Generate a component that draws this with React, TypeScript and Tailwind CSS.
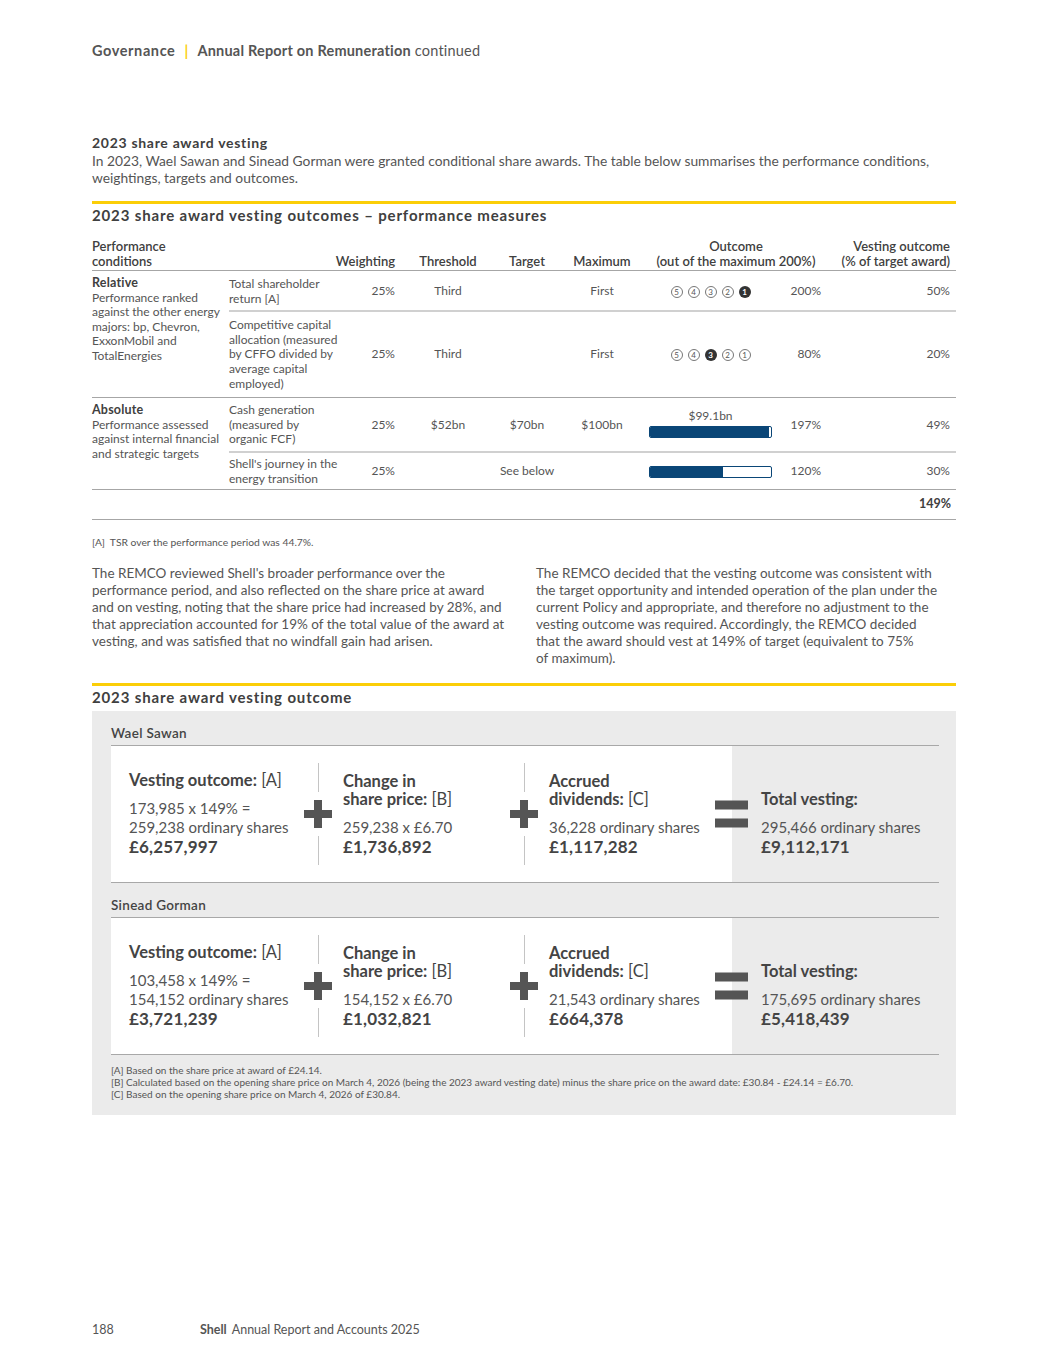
import React from "react";

const ROW_GRID =
  "grid grid-cols-[116px_55px_96px_62px_88px_129px_51px_129px] items-center";

function Circles({ active }: { active: number }) {
  return (
    <div className="flex items-center gap-[5px]">
      {[5, 4, 3, 2, 1].map((n) => (
        <span
          key={n}
          className={
            n === active
              ? "flex h-[12px] w-[12px] items-center justify-center rounded-full bg-[#333] text-[8px] font-bold leading-none text-white"
              : "flex h-[12px] w-[12px] items-center justify-center rounded-full border border-[#777] text-[8px] leading-none text-[#555]"
          }
        >
          {n}
        </span>
      ))}
    </div>
  );
}

function Bar({ pct }: { pct: number }) {
  return (
    <div className="h-[12px] w-[123px] rounded-[2px] border border-[#0a4677] bg-white">
      <div
        className="h-full rounded-l-[1px] bg-[#0a4677]"
        style={{ width: `${pct}%` }}
      />
    </div>
  );
}

type SubRow = {
  measure: React.ReactNode;
  weight: string;
  threshold?: string;
  target?: string;
  maximum?: string;
  outcome: React.ReactNode;
  pct: string;
  vest: string;
  pad: string;
};

function Group({
  title,
  desc,
  rows,
}: {
  title: string;
  desc: React.ReactNode;
  rows: SubRow[];
}) {
  return (
    <div className="flex border-b border-[#a6a6a6]">
      <div className="w-[137px] shrink-0 pt-[5px] pr-2 text-[12px] leading-[14.6px] text-[#555]">
        <div className="text-[12.5px] font-bold tracking-[0.2px] text-[#404040]">
          {title}
        </div>
        {desc}
      </div>
      <div className="flex-1">
        {rows.map((r, i) => (
          <div
            key={i}
            className={`${ROW_GRID} ${r.pad} ${
              i < rows.length - 1 ? "border-b-2 border-[#d0d0d0]" : ""
            } text-[12px] leading-[14.6px] text-[#555]`}
          >
            <div>{r.measure}</div>
            <div className="pr-[5px] text-right">{r.weight}</div>
            <div className="text-center">{r.threshold}</div>
            <div className="text-center">{r.target}</div>
            <div className="text-center">{r.maximum}</div>
            <div className="flex justify-center">{r.outcome}</div>
            <div className="pr-[5px] text-right">{r.pct}</div>
            <div className="pr-[5px] text-right">{r.vest}</div>
          </div>
        ))}
      </div>
    </div>
  );
}

function Plus() {
  return (
    <svg width="28" height="28" viewBox="0 0 28 28" className="shrink-0">
      <path d="M10 0h8v10h10v8H18v10h-8V18H0v-8h10z" fill="#555" />
    </svg>
  );
}

function Sep() {
  return (
    <div className="flex w-[50px] shrink-0 flex-col items-center">
      <div className="w-px flex-1 bg-[#c4c4c4]" />
      <div className="py-[8px]">
        <Plus />
      </div>
      <div className="w-px flex-1 bg-[#c4c4c4]" />
    </div>
  );
}

function Head({ bold, tag }: { bold: React.ReactNode; tag?: string }) {
  return (
    <div className="whitespace-nowrap text-[16.5px] leading-[18px] text-[#444]">
      <span className="font-bold">{bold}</span>
      {tag && <span className="font-normal"> {tag}</span>}
    </div>
  );
}

function Values({ lines, total }: { lines: string[]; total: string }) {
  return (
    <div className="mt-[10px] whitespace-nowrap text-[15px] leading-[19px] text-[#555]">
      {lines.map((l) => (
        <div key={l}>{l}</div>
      ))}
      <div className="text-[17px] font-bold tracking-[0.2px] text-[#444]">
        {total}
      </div>
    </div>
  );
}

function Person({
  name,
  a,
  b,
  c,
  t,
}: {
  name: string;
  a: { lines: string[]; total: string };
  b: { lines: string[]; total: string };
  c: { lines: string[]; total: string };
  t: { lines: string[]; total: string };
}) {
  return (
    <>
      <div className="flex h-[35px] items-end border-b border-[#a8a8a8] pb-[4px] text-[13.5px] font-semibold leading-[16px] tracking-[0.3px] text-[#444]">
        {name}
      </div>
      <div className="flex h-[137px] border-b border-[#a8a8a8]">
        <div className="flex w-[621px] bg-white py-[17px]">
          <div className="flex w-[182px] flex-col justify-end pb-[9px] pl-[18px]">
            <Head bold="Vesting outcome:" tag="[A]" />
            <Values {...a} />
          </div>
          <Sep />
          <div className="flex w-[156px] flex-col justify-end pb-[9px]">
            <Head
              bold={
                <>
                  Change in
                  <br />
                  share price:
                </>
              }
              tag="[B]"
            />
            <Values {...b} />
          </div>
          <Sep />
          <div className="flex w-[183px] flex-col justify-end pb-[9px]">
            <Head
              bold={
                <>
                  Accrued
                  <br />
                  dividends:
                </>
              }
              tag="[C]"
            />
            <Values {...c} />
          </div>
        </div>
        <div className="relative flex flex-1 flex-col justify-end py-[17px] pb-[26px] pl-[29px]">
          <div className="absolute left-[-17px] top-1/2 flex -translate-y-1/2 flex-col gap-[9px]">
            <div className="h-[9px] w-[33px] bg-[#555]" />
            <div className="h-[9px] w-[33px] bg-[#555]" />
          </div>
          <Head bold="Total vesting:" />
          <Values {...t} />
        </div>
      </div>
    </>
  );
}

export default function App() {
  return (
    <div
      className="flex h-[1365px] w-[1048px] flex-col bg-white px-[92px] text-[#555]"
      style={{ fontFamily: "Lato, 'Noto Sans', sans-serif" }}
    >
      {/* running header */}
      <div className="mt-[42px] flex items-center text-[14.5px] leading-[18px] tracking-[0.2px] text-[#555]">
        <span className="font-bold tracking-[0.6px]">Governance</span>
        <span className="mx-[9px] font-bold text-[#fbce07]">|</span>
        <span className="font-bold">Annual Report on Remuneration</span>
        <span className="ml-[4px]">continued</span>
      </div>

      <div className="mt-[74px] text-[14px] font-bold leading-[18px] tracking-[0.7px] text-[#404040]">
        2023 share award vesting
      </div>
      <p className="text-[13.8px] leading-[17px] text-[#555]">
        In 2023, Wael Sawan and Sinead Gorman were granted conditional share
        awards. The table below summarises the performance conditions,
        <br />
        weightings, targets and outcomes.
      </p>

      <div className="mt-[15px] h-[3px] bg-[#fbce07]" />
      <div className="mt-[2px] text-[15px] font-bold leading-[18px] tracking-[0.85px] text-[#404040]">
        2023 share award vesting outcomes – performance measures
      </div>

      {/* table header */}
      <div className="mt-[15px] flex items-end border-b border-[#a6a6a6] pb-[1px] text-[13px] font-semibold leading-[15px] text-[#404040]">
        <div className="w-[137px] shrink-0">
          Performance
          <br />
          conditions
        </div>
        <div className={`${ROW_GRID} flex-1 !items-end`}>
          <div />
          <div className="flex justify-end whitespace-nowrap pr-[5px]">
            Weighting
          </div>
          <div className="text-center">Threshold</div>
          <div className="text-center">Target</div>
          <div className="text-center">Maximum</div>
          <div className="col-span-2 whitespace-nowrap text-center">
            Outcome
            <br />
            (out of the maximum 200%)
          </div>
          <div className="flex flex-col items-end whitespace-nowrap pr-[5px]">
            <span>Vesting outcome</span>
            <span>(% of target award)</span>
          </div>
        </div>
      </div>

      <Group
        title="Relative"
        desc={
          <>
            Performance ranked
            <br />
            against the other energy
            <br />
            majors: bp, Chevron,
            <br />
            ExxonMobil and
            <br />
            TotalEnergies
          </>
        }
        rows={[
          {
            measure: (
              <>
                Total shareholder
                <br />
                return [A]
              </>
            ),
            weight: "25%",
            threshold: "Third",
            maximum: "First",
            outcome: <Circles active={1} />,
            pct: "200%",
            vest: "50%",
            pad: "pt-[6px] pb-[4px]",
          },
          {
            measure: (
              <>
                Competitive capital
                <br />
                allocation (measured
                <br />
                by CFFO divided by
                <br />
                average capital
                <br />
                employed)
              </>
            ),
            weight: "25%",
            threshold: "Third",
            maximum: "First",
            outcome: <Circles active={3} />,
            pct: "80%",
            vest: "20%",
            pad: "pt-[6px] pb-[6px]",
          },
        ]}
      />
      <Group
        title="Absolute"
        desc={
          <>
            Performance assessed
            <br />
            against internal financial
            <br />
            and strategic targets
          </>
        }
        rows={[
          {
            measure: (
              <>
                Cash generation
                <br />
                (measured by
                <br />
                organic FCF)
              </>
            ),
            weight: "25%",
            threshold: "$52bn",
            target: "$70bn",
            maximum: "$100bn",
            outcome: (
              <div className="mb-[4px] flex flex-col items-center">
                <div className="mb-[3px] text-[12px] leading-[14px]">
                  $99.1bn
                </div>
                <Bar pct={98.5} />
              </div>
            ),
            pct: "197%",
            vest: "49%",
            pad: "pt-[5px] pb-[4px]",
          },
          {
            measure: (
              <>
                Shell's journey in the
                <br />
                energy transition
              </>
            ),
            weight: "25%",
            target: "See below",
            outcome: <Bar pct={60} />,
            pct: "120%",
            vest: "30%",
            pad: "pt-[4px] pb-[3px]",
          },
        ]}
      />
      <div className="flex h-[30px] items-center justify-end border-b border-[#a6a6a6] pr-[5px] text-[12.5px] font-bold text-[#404040]">
        149%
      </div>

      <div className="mt-[16px] text-[10.3px] leading-[12px] text-[#555]">
        [A]&nbsp; TSR over the performance period was 44.7%.
      </div>

      <div className="mt-[17px] grid grid-cols-2 gap-[24px] text-[13.5px] leading-[17px] text-[#555]">
        <p className="whitespace-nowrap">
          The REMCO reviewed Shell's broader performance over the
          <br />
          performance period, and also reflected on the share price at award
          <br />
          and on vesting, noting that the share price had increased by 28%, and
          <br />
          that appreciation accounted for 19% of the total value of the award at
          <br />
          vesting, and was satisfied that no windfall gain had arisen.
        </p>
        <p className="whitespace-nowrap">
          The REMCO decided that the vesting outcome was consistent with
          <br />
          the target opportunity and intended operation of the plan under the
          <br />
          current Policy and appropriate, and therefore no adjustment to the
          <br />
          vesting outcome was required. Accordingly, the REMCO decided
          <br />
          that the award should vest at 149% of target (equivalent to 75%
          <br />
          of maximum).
        </p>
      </div>

      <div className="mt-[16px] h-[3px] bg-[#fbce07]" />
      <div className="mt-[2px] text-[15px] font-bold leading-[18px] tracking-[0.85px] text-[#404040]">
        2023 share award vesting outcome
      </div>

      <div className="mt-[5px] bg-[#ebebeb] pb-[15px] pl-[19px] pr-[17px]">
        <Person
          name="Wael Sawan"
          a={{
            lines: ["173,985 x 149% =", "259,238 ordinary shares"],
            total: "£6,257,997",
          }}
          b={{ lines: ["259,238 x £6.70"], total: "£1,736,892" }}
          c={{ lines: ["36,228 ordinary shares"], total: "£1,117,282" }}
          t={{ lines: ["295,466 ordinary shares"], total: "£9,112,171" }}
        />
        <Person
          name="Sinead Gorman"
          a={{
            lines: ["103,458 x 149% =", "154,152 ordinary shares"],
            total: "£3,721,239",
          }}
          b={{ lines: ["154,152 x £6.70"], total: "£1,032,821" }}
          c={{ lines: ["21,543 ordinary shares"], total: "£664,378" }}
          t={{ lines: ["175,695 ordinary shares"], total: "£5,418,439" }}
        />
        <div className="pt-[9px] text-[10px] leading-[12px] text-[#555]">
          <div>[A] Based on the share price at award of £24.14.</div>
          <div>
            [B] Calculated based on the opening share price on March 4, 2026
            (being the 2023 award vesting date) minus the share price on the
            award date: £30.84 - £24.14 = £6.70.
          </div>
          <div>[C] Based on the opening share price on March 4, 2026 of £30.84.</div>
        </div>
      </div>

      {/* footer */}
      <div className="mb-[27px] mt-auto flex text-[12.5px] leading-[16px] text-[#555]">
        <span className="w-[108px]">188</span>
        <span className="font-bold">Shell</span>
        <span className="ml-[5px]">Annual Report and Accounts 2025</span>
      </div>
    </div>
  );
}
